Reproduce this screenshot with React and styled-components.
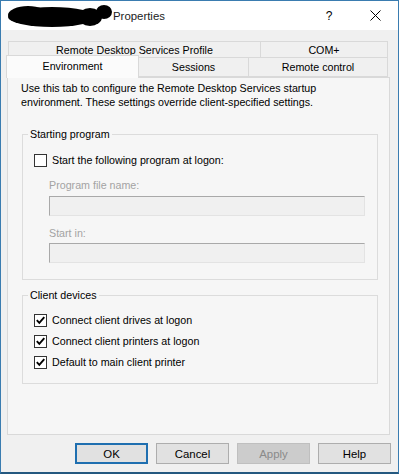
import React from "react";
import styled, { createGlobalStyle } from "styled-components";

const GlobalStyle = createGlobalStyle`
  html, body {
    margin: 0;
    padding: 0;
    background: #f0f0f0;
  }
`;

export default function App() {
  return (
    <>
      <GlobalStyle />
      <Window>
        <TitleBar>
          <Redaction width="110" height="24" viewBox="0 0 110 24">
            <ellipse cx="48" cy="13" rx="44" ry="10" fill="#000" />
            <ellipse cx="24" cy="11" rx="20" ry="9" fill="#000" />
            <ellipse cx="100" cy="8" rx="8" ry="7" fill="#000" />
            <ellipse cx="86" cy="13" rx="12" ry="9" fill="#000" />
          </Redaction>
          <Title>Properties</Title>
          <CaptionButtons>
            <CaptionButton>?</CaptionButton>
            <CaptionButton>
              <svg width="11" height="11" viewBox="0 0 11 11">
                <path d="M0.5 0.5 L10.5 10.5 M10.5 0.5 L0.5 10.5" stroke="#000" strokeWidth="1" />
              </svg>
            </CaptionButton>
          </CaptionButtons>
        </TitleBar>

        <Body>
          <TabRowBack>
            <Tab $w={253}>Remote Desktop Services Profile</Tab>
            <Tab $w={128}>COM+</Tab>
          </TabRowBack>
          <TabRowFront>
            <SelectedTab>Environment</SelectedTab>
            <Tab $w={111} $tall>Sessions</Tab>
            <Tab $w={140} $tall>Remote control</Tab>
          </TabRowFront>

          <Panel>
            <Intro>
              Use this tab to configure the Remote Desktop Services startup
              <br />
              environment. These settings override client-specified settings.
            </Intro>

            <Group $pad="12px 12px 16px 11px">
              <Legend>Starting program</Legend>
              <CheckRow>
                <Box />
                <span>Start the following program at logon:</span>
              </CheckRow>
              <FieldLabel $top={11}>Program file name:</FieldLabel>
              <TextField $top={4} />
              <FieldLabel $top={10}>Start in:</FieldLabel>
              <TextField $top={3} />
            </Group>

            <Group $pad="11px 12px 14px 11px" $top={8}>
              <Legend>Client devices</Legend>
              <CheckList>
                <CheckRow>
                  <Box>
                    <Tick />
                  </Box>
                  <span>Connect client drives at logon</span>
                </CheckRow>
                <CheckRow>
                  <Box>
                    <Tick />
                  </Box>
                  <span>Connect client printers at logon</span>
                </CheckRow>
                <CheckRow>
                  <Box>
                    <Tick />
                  </Box>
                  <span>Default to main client printer</span>
                </CheckRow>
              </CheckList>
            </Group>
          </Panel>
        </Body>

        <Footer>
          <Button $default>OK</Button>
          <Button>Cancel</Button>
          <Button disabled>Apply</Button>
          <Button>Help</Button>
        </Footer>
      </Window>
    </>
  );
}

const Tick = () => (
  <svg width="11" height="11" viewBox="0 0 11 11">
    <path d="M1.8 5.2 L4.3 7.8 L9.3 2.2" stroke="#000" strokeWidth="1.9" fill="none" />
  </svg>
);

const Window = styled.div`
  width: 399px;
  height: 474px;
  box-sizing: border-box;
  border: 1px solid #3a7cb0;
  border-bottom: 2px solid #24587f;
  background: #f0f0f0;
  display: flex;
  flex-direction: column;
  font-family: "Liberation Sans", Arial, sans-serif;
  font-size: 10.7px;
  color: #000;
`;

const TitleBar = styled.div`
  height: 29px;
  flex-shrink: 0;
  background: #fff;
  display: flex;
  align-items: center;
`;

const Redaction = styled.svg`
  margin-left: 3px;
  margin-top: 1px;
  flex-shrink: 0;
`;

const Title = styled.div`
  font-size: 11.4px;
  color: #222;
  margin-left: -1px;
`;

const CaptionButtons = styled.div`
  margin-left: auto;
  display: flex;
  height: 100%;
`;

const CaptionButton = styled.div`
  width: 46px;
  display: flex;
  align-items: center;
  justify-content: center;
  font-size: 12px;
`;

const Body = styled.div`
  padding: 11px 8px 0 6px;
  display: flex;
  flex-direction: column;
`;

const TabRowBack = styled.div`
  display: flex;
  margin-left: 1px;
`;

const TabRowFront = styled.div`
  display: flex;
  align-items: flex-end;
  margin: -3px 0 0 -1px;
  height: 22px;
`;

const Tab = styled.div`
  box-sizing: border-box;
  width: ${(p) => p.$w}px;
  height: ${(p) => (p.$tall ? 20 : 17)}px;
  border: 1px solid #d9d9d9;
  margin-left: -1px;
  &:first-child {
    margin-left: 0;
  }
  background: #f0f0f0;
  display: flex;
  align-items: center;
  justify-content: center;
  line-height: 14px;
`;

const SelectedTab = styled.div`
  position: relative;
  z-index: 1;
  box-sizing: border-box;
  width: 133px;
  height: 23px;
  margin-bottom: -1px;
  border: 1px solid #d9d9d9;
  border-bottom: none;
  background: #fbfbfb;
  display: flex;
  justify-content: center;
  padding-top: 3px;
  line-height: 14px;
`;

const Panel = styled.div`
  height: 358px;
  box-sizing: border-box;
  border: 1px solid #d9d9d9;
  background: #f6f6f6;
  padding: 3px 11px 0 14px;
`;

const Intro = styled.div`
  line-height: 14px;
  margin-left: -1px;
`;

const Group = styled.fieldset`
  margin: ${(p) => p.$top || 18}px 0 0 0;
  padding: ${(p) => p.$pad};
  border: 1px solid #dcdcdc;
  min-width: 0;
`;

const Legend = styled.legend`
  padding: 0 2px;
  margin-left: -6px;
  line-height: 14px;
`;

const CheckList = styled.div`
  display: flex;
  flex-direction: column;
  gap: 7px;
`;

const CheckRow = styled.div`
  display: flex;
  align-items: center;
  gap: 5px;
  height: 14px;
  line-height: 14px;
`;

const Box = styled.span`
  box-sizing: border-box;
  width: 13px;
  height: 13px;
  border: 1px solid #333;
  background: #fff;
  display: flex;
  align-items: center;
  justify-content: center;
  flex-shrink: 0;
`;

const FieldLabel = styled.div`
  margin: ${(p) => p.$top}px 0 0 15px;
  line-height: 14px;
  color: #a3a3a3;
`;

const TextField = styled.div`
  box-sizing: border-box;
  margin: ${(p) => p.$top}px 0 0 15px;
  width: 316px;
  height: 20px;
  background: #f0f0f0;
  border: 1px solid;
  border-color: #a9a9a9 #e3e3e3 #e3e3e3 #a9a9a9;
`;

const Footer = styled.div`
  display: flex;
  justify-content: flex-end;
  gap: 8px;
  padding: 8px 7px 8px 0;
`;

const Button = styled.button`
  box-sizing: border-box;
  width: 73px;
  height: 21px;
  padding: 0;
  font-family: inherit;
  font-size: 11.4px;
  color: #000;
  background: #e1e1e1;
  border: 1px solid #adadad;
  border-radius: 0;
  ${(p) => p.$default && `border: 2px solid #1f6fb0;`}
  &:disabled {
    background: #cccccc;
    border-color: #bfbfbf;
    color: #8a8a8a;
  }
`;
